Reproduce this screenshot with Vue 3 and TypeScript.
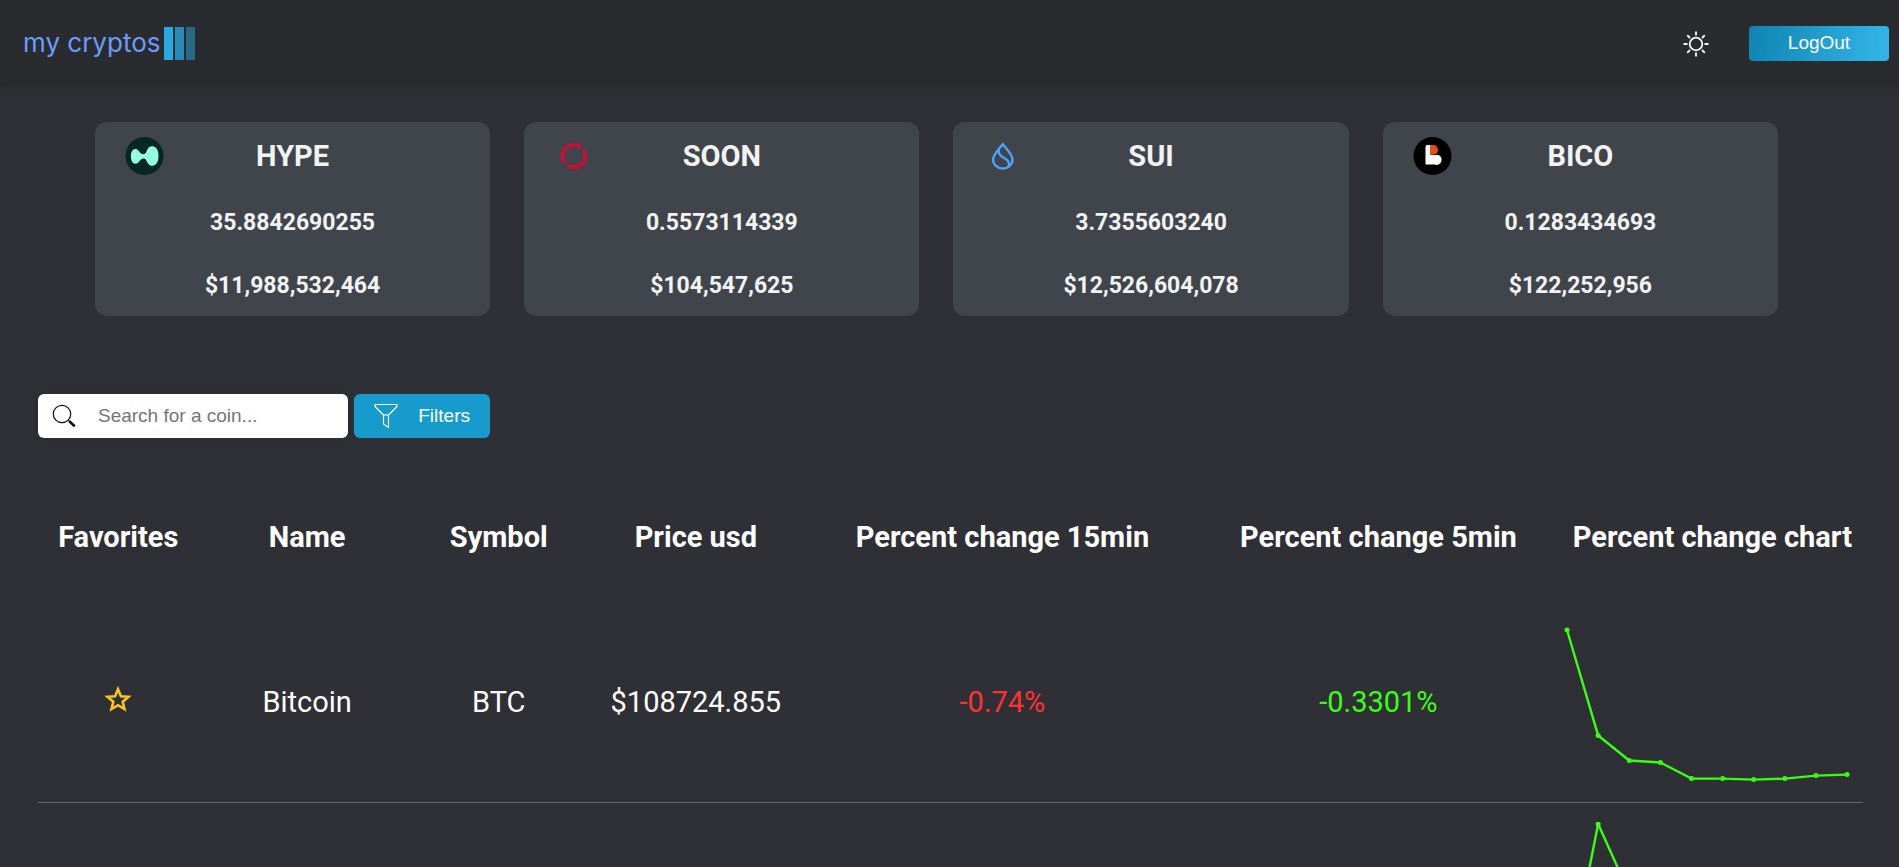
<script setup lang="ts">
interface MarketCard {
  symbol: string
  price: string
  volume: string
}

interface CoinRow {
  id: number
  name: string
  symbol: string
  price: string
  change15: string
  change5: string
  history: number[]
}

const cards: MarketCard[] = [
  { symbol: 'HYPE', price: '35.8842690255', volume: '$11,988,532,464' },
  { symbol: 'SOON', price: '0.5573114339', volume: '$104,547,625' },
  { symbol: 'SUI', price: '3.7355603240', volume: '$12,526,604,078' },
  { symbol: 'BICO', price: '0.1283434693', volume: '$122,252,956' },
]

const columns: string[] = [
  'Favorites',
  'Name',
  'Symbol',
  'Price usd',
  'Percent change 15min',
  'Percent change 5min',
  'Percent change chart',
]

// Chart values are heights above the bottom edge of a 300 x 160 plot.
const coins: CoinRow[] = [
  {
    id: 1,
    name: 'Bitcoin',
    symbol: 'BTC',
    price: '$108724.855',
    change15: '-0.74%',
    change5: '-0.3301%',
    history: [152, 47, 22, 20, 4, 4, 3, 4, 7, 8],
  },
  {
    id: 2,
    name: '',
    symbol: '',
    price: '',
    change15: '',
    change5: '',
    history: [2, 158, 89, 60, 42, 30, 24, 22, 18, 16],
  },
]

const pointX = (i: number): number => 5 + i * 31
const pointY = (v: number): number => 160 - v
const line = (h: number[]): string => h.map((v, i) => `${pointX(i)},${pointY(v)}`).join(' ')
</script>

<template>
  <div class="page">
    <header class="topbar">
      <a class="logo" href="#">
        <span>my cryptos</span>
        <svg class="logo-bars" viewBox="0 0 31 33" aria-hidden="true">
          <rect width="9" height="33" fill="#27aae1" />
          <rect x="11" width="9" height="33" fill="#278bb5" />
          <rect x="22" width="9" height="33" fill="#266a87" />
        </svg>
      </a>
      <div class="actions">
        <button class="theme" type="button" aria-label="Toggle theme">
          <svg viewBox="0 0 26 26" fill="none" stroke="#f5f5f5" aria-hidden="true">
            <circle cx="13" cy="13" r="6.3" stroke-width="1.8" />
            <path
              d="M13 1.200v2.600M13 22.200v2.600M1.200 13h2.600M22.200 13h2.600M4.700 4.700l1.800 1.800M19.500 19.500l1.800 1.800M4.700 21.300l1.800-1.800M19.500 6.500l1.800-1.800"
              stroke-width="1.9"
              stroke-linecap="round"
            />
          </svg>
        </button>
        <button class="logout" type="button">LogOut</button>
      </div>
    </header>

    <main>
      <section class="cards">
        <article v-for="card in cards" :key="card.symbol" class="card">
          <div class="card-head">
            <svg v-if="card.symbol === 'HYPE'" viewBox="0 0 38 38" aria-hidden="true">
              <circle cx="19" cy="19" r="19" fill="#072723" />
              <path
                d="M33 18.8c0 6.500-2.700 10-6.200 10-3.900 0-4.800-3.400-6.200-5.800-1.100-1.800-3.600-2-5.200-.4-1.600 1.700-2.700 4.200-5.400 4.200-3 0-4.600-3.200-4.600-7.700 0-4.300 1.700-7.200 4.600-7.200 2.600 0 3.500 2.700 5.300 4.300 1.800 1.500 4.200 1.400 5.400-.9 1.200-2.400 2-6 6-6 3.700 0 6.300 3.500 6.300 9.500z"
                fill="#97fce4"
              />
            </svg>
            <svg v-else-if="card.symbol === 'SOON'" viewBox="0 0 38 38" fill="none" stroke="#c20f3c" stroke-width="4.200" stroke-linecap="round" aria-hidden="true">
              <path d="M25 9.200A11.400 11.400 0 0 0 9.300 24.300" />
              <path d="M29.500 13.800A11.400 11.400 0 0 1 14.500 29.200" />
            </svg>
            <svg v-else-if="card.symbol === 'SUI'" viewBox="0 0 38 38" fill="none" stroke="#4ca3ff" stroke-width="2.300" aria-hidden="true">
              <path d="M19.300 7.300C22.300 11.300 29 17.500 29 22.400a9.700 9.200 0 0 1-19.400 0C9.600 17.500 16.300 11.300 19.300 7.300z" />
              <path d="M15.500 12.500c-2.500 9.500 12 7 9.700 16.500" />
            </svg>
            <svg v-else viewBox="0 0 38 38" aria-hidden="true">
              <circle cx="19" cy="19" r="19" fill="#000" />
              <path d="M12 10a2 2 0 0 1 2-2h3v10h8a5 5 0 0 1-4 9.500h-9z" fill="#fff" />
              <path d="M17 8h2.500a5 5 0 0 1 2.500 9.300L17 18z" fill="#ee4a0c" />
            </svg>
            <h2>{{ card.symbol }}</h2>
          </div>
          <p>{{ card.price }}</p>
          <p>{{ card.volume }}</p>
        </article>
      </section>

      <section class="market">
        <div class="tools">
          <label class="search">
            <svg viewBox="0 0 24 24" fill="none" stroke="#111" aria-hidden="true">
              <circle cx="10" cy="10" r="8.700" stroke-width="1.200" />
              <path d="M16.200 16.200l1.500 1.500" stroke-width="1.300" />
              <path d="M17.300 17.300l5.400 5" stroke-width="2.600" />
            </svg>
            <input type="search" placeholder="Search for a coin..." aria-label="Search for a coin" />
          </label>
          <button class="filters" type="button">
            <svg viewBox="0 0 24 26" fill="none" stroke="#fff" stroke-width="1.100" stroke-linejoin="round" aria-hidden="true">
              <path d="M1 1.500h22v2L14.500 12v12.500l-5-3.500v-9L1 3.500z" />
              <path d="M9.500 12h5" />
            </svg>
            <span>Filters</span>
          </button>
        </div>

        <table>
          <colgroup>
            <col v-for="(c, i) in columns" :key="c" :class="`col-${i}`" />
          </colgroup>
          <thead>
            <tr>
              <th v-for="c in columns" :key="c" scope="col">{{ c }}</th>
            </tr>
          </thead>
          <tbody>
            <tr v-for="coin in coins" :key="coin.id">
              <td>
                <button class="star" type="button" aria-label="Add to favorites">
                  <svg viewBox="0 0 28 28" fill="none" stroke="#fbc51f" stroke-width="2.600" aria-hidden="true">
                    <path d="M14 5.200l2.900 7 7.600.6-5.800 4.900 1.800 7.400L14 21.200l-6.500 3.900 1.800-7.400-5.800-4.900 7.600-.6z" />
                  </svg>
                </button>
              </td>
              <td>{{ coin.name }}</td>
              <td>{{ coin.symbol }}</td>
              <td>{{ coin.price }}</td>
              <td class="down">{{ coin.change15 }}</td>
              <td class="up">{{ coin.change5 }}</td>
              <td class="chart-cell">
                <svg class="chart" viewBox="0 0 300 160" aria-hidden="true">
                  <polyline :points="line(coin.history)" />
                  <circle v-for="(v, i) in coin.history" :key="i" :cx="pointX(i)" :cy="pointY(v)" r="2.500" />
                </svg>
              </td>
            </tr>
          </tbody>
        </table>
      </section>
    </main>
  </div>
</template>

<style>
body {
  background: #2f3035;
}
</style>

<style scoped>
* {
  box-sizing: border-box;
}
.page {
  height: 100vh;
  overflow: hidden;
  background: #2f3035;
  color: #fff;
  font-family: Roboto, sans-serif;
}
button,
input {
  border: 0;
  font-family: "Liberation Sans", Arial, sans-serif;
  font-size: 19px;
}
button {
  cursor: pointer;
}
.topbar {
  display: flex;
  align-items: center;
  justify-content: space-between;
  height: 87px;
  padding: 0 10px 0 23px;
  background: #2a2b2e;
  box-shadow: 0 2px 10px rgba(0, 0, 0, 0.1);
}
.logo {
  display: flex;
  align-items: center;
  gap: 4px;
  color: #6c9bff;
  font-family: Inter, sans-serif;
  font-size: 26px;
  font-weight: 400;
  line-height: 32px;
  text-decoration: none;
}
.logo span {
  padding-bottom: 2px;
}
.logo-bars {
  width: 31px;
  height: 33px;
}
.actions {
  display: flex;
  align-items: center;
  gap: 40px;
}
.theme {
  padding: 0;
  background: none;
}
.theme svg {
  display: block;
  width: 26px;
  height: 26px;
}
.logout {
  width: 140px;
  height: 35px;
  padding: 0 0 2px;
  border-radius: 4px;
  background: linear-gradient(100deg, #0f84b2, #34b6ea);
  color: #fff;
}
.cards {
  display: grid;
  grid-template-columns: repeat(4, 1fr);
  gap: 34px;
  padding: 35px 121px 78px 5%;
}
.card {
  padding: 15px 30px 16px;
  border-radius: 12px;
  background: #40454b;
  color: #f2f2f2;
  text-align: center;
}
.card-head {
  display: grid;
  grid-template-columns: 39px 1fr 39px;
  align-items: center;
}
.card-head svg {
  display: block;
  width: 39px;
  height: 38px;
}
.card h2 {
  margin: 0;
  font-size: 29px;
  line-height: 38px;
}
.card p {
  margin: 34px 0 0;
  font-size: 23px;
  font-weight: 700;
  line-height: 28px;
}
.card p + p {
  margin-top: 35px;
}
.market {
  padding: 0 36px 0 2%;
}
.tools {
  display: flex;
  gap: 6px;
}
.search {
  display: flex;
  align-items: center;
  gap: 22px;
  width: 310px;
  height: 44px;
  padding: 0 14px;
  border-radius: 6px;
  background: #fff;
  box-shadow: 0 0 8px rgba(0, 0, 0, 0.15);
}
.search svg {
  flex: none;
  width: 24px;
  height: 24px;
}
.search input {
  flex: 1;
  min-width: 0;
  padding: 0;
  background: none;
  outline: 0;
}
.search input::placeholder {
  color: #757575;
}
.filters {
  display: flex;
  align-items: center;
  justify-content: space-between;
  width: 136px;
  height: 44px;
  padding: 0 20px;
  border-radius: 6px;
  background: #179bcd;
  color: #fff;
}
.filters svg {
  width: 24px;
  height: 26px;
}
table {
  width: 100%;
  margin-top: 34px;
  border-collapse: collapse;
  table-layout: fixed;
}
.col-0 {
  width: 8.8%;
}
.col-1 {
  width: 11.9%;
}
.col-2 {
  width: 9.1%;
}
.col-3 {
  width: 12.5%;
}
.col-4 {
  width: 21.1%;
}
.col-5 {
  width: 20.1%;
}
.col-6 {
  width: 16.5%;
}
th,
td {
  padding: 0;
  font-size: 29px;
  text-align: center;
  white-space: nowrap;
}
th {
  height: 130px;
}
td {
  height: 200px;
}
tbody tr {
  border-bottom: 1px solid #66676b;
}
.down {
  color: #ff3131;
}
.up {
  color: #39ff14;
}
.star {
  padding: 0;
  background: none;
}
.star svg {
  display: block;
  width: 28px;
  height: 28px;
}
.chart-cell {
  padding-top: 1px;
}
.chart {
  display: block;
  width: 100%;
}
.chart polyline {
  fill: none;
  stroke: #39ff14;
  stroke-width: 2.4;
}
.chart circle {
  fill: #39ff14;
}
</style>
